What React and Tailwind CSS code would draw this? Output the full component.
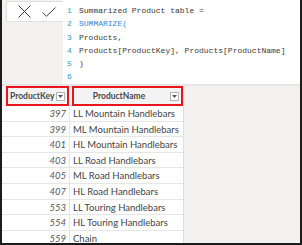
import React from 'react'

const ROWS = [
  [397, 'LL Mountain Handlebars'],
  [399, 'ML Mountain Handlebars'],
  [401, 'HL Mountain Handlebars'],
  [403, 'LL Road Handlebars'],
  [405, 'ML Road Handlebars'],
  [407, 'HL Road Handlebars'],
  [553, 'LL Touring Handlebars'],
  [554, 'HL Touring Handlebars'],
  [559, 'Chain'],
]

const CODE = [
  <>Summarized Product table =</>,
  <span className="text-[#3b86d6]">SUMMARIZE(</span>,
  <>Products,</>,
  <>Products[ProductKey], Products[ProductName]</>,
  <>)</>,
  <></>,
]

function DropBtn() {
  return (
    <div className="w-[9px] h-[9px] border border-[#b5b5b5] bg-white flex items-center justify-center">
      <svg width="5" height="3" viewBox="0 0 5 3">
        <path d="M0 0h5L2.5 3z" fill="#555" />
      </svg>
    </div>
  )
}

export default function App() {
  return (
    <div
      className="w-[302px] h-[245px] overflow-hidden bg-[#f3f2f1] border-l-2 border-r-2 border-b-2 border-[#1c1c1c] flex flex-col"
      style={{ fontFamily: 'Lato, sans-serif' }}
    >
      {/* formula bar */}
      <div className="h-[84px] flex shrink-0">
        <div className="w-[61px] pl-[4px] pt-[1px]">
          <div className="w-[58px] h-[21px] bg-white border border-[#e1dfdd] flex items-center pl-[11px] gap-[11px]">
            <svg width="13" height="13" viewBox="0 0 13 13">
              <path d="M0.5 0.5L12.5 12.5M12.5 0.5L0.5 12.5" stroke="#3a3a3a" strokeWidth="1" fill="none" />
            </svg>
            <svg width="14" height="10" viewBox="0 0 14 10">
              <path d="M0.5 5.5L4.5 9.2L13.5 0.5" stroke="#3a3a3a" strokeWidth="1" fill="none" />
            </svg>
          </div>
        </div>
        <div className="flex-1 bg-white flex pt-[4px]" style={{ fontFamily: '"Liberation Mono", monospace' }}>
          <div className="w-[16px] pl-[4px] text-[8px] text-[#3b9ab8] leading-[13.3px]">
            {CODE.map((_, i) => (
              <div key={i}>{i + 1}</div>
            ))}
          </div>
          <div className="text-[8px] text-[#3a3a3a] leading-[13.3px] whitespace-pre">
            {CODE.map((c, i) => (
              <div key={i} className="h-[13.3px]">{c}</div>
            ))}
          </div>
        </div>
      </div>
      <div className="h-[2px] bg-[#e6e5e3] shrink-0" />

      {/* table */}
      <div className="flex flex-1 min-h-0">
        <div className="w-[181px] bg-white flex flex-col">
          <div className="h-[20px] flex bg-[#f3f3f3] shrink-0">
            <div className="w-[68px] pl-[4px] pr-[1px]">
              <div className="h-full border-2 border-[#e8161c] flex items-center pl-[2px] pr-[2px] justify-between">
                <span className="text-[8.5px] font-bold text-[#4a4948]">ProductKey</span>
                <DropBtn />
              </div>
            </div>
            <div className="flex-1 pl-[2px]">
              <div className="h-full border-2 border-[#e8161c] flex items-center pr-[2px]">
                <span className="flex-1 text-center text-[8.5px] font-bold text-[#4a4948] pr-[6px]">ProductName</span>
                <DropBtn />
              </div>
            </div>
          </div>
          {ROWS.map(([k, n]) => (
            <div key={k} className="h-[15.6px] shrink-0 flex border-b border-[#e6e6e6] text-[9.5px] text-[#444]">
              <div className="w-[68px] border-r border-[#e6e6e6] text-right pr-[3px] italic leading-[15px] text-[#555]">{k}</div>
              <div className="flex-1 pl-[3px] leading-[15px] whitespace-nowrap">{n}</div>
            </div>
          ))}
        </div>
        <div className="flex-1 border-l border-[#e1dfdd]" />
      </div>
    </div>
  )
}
